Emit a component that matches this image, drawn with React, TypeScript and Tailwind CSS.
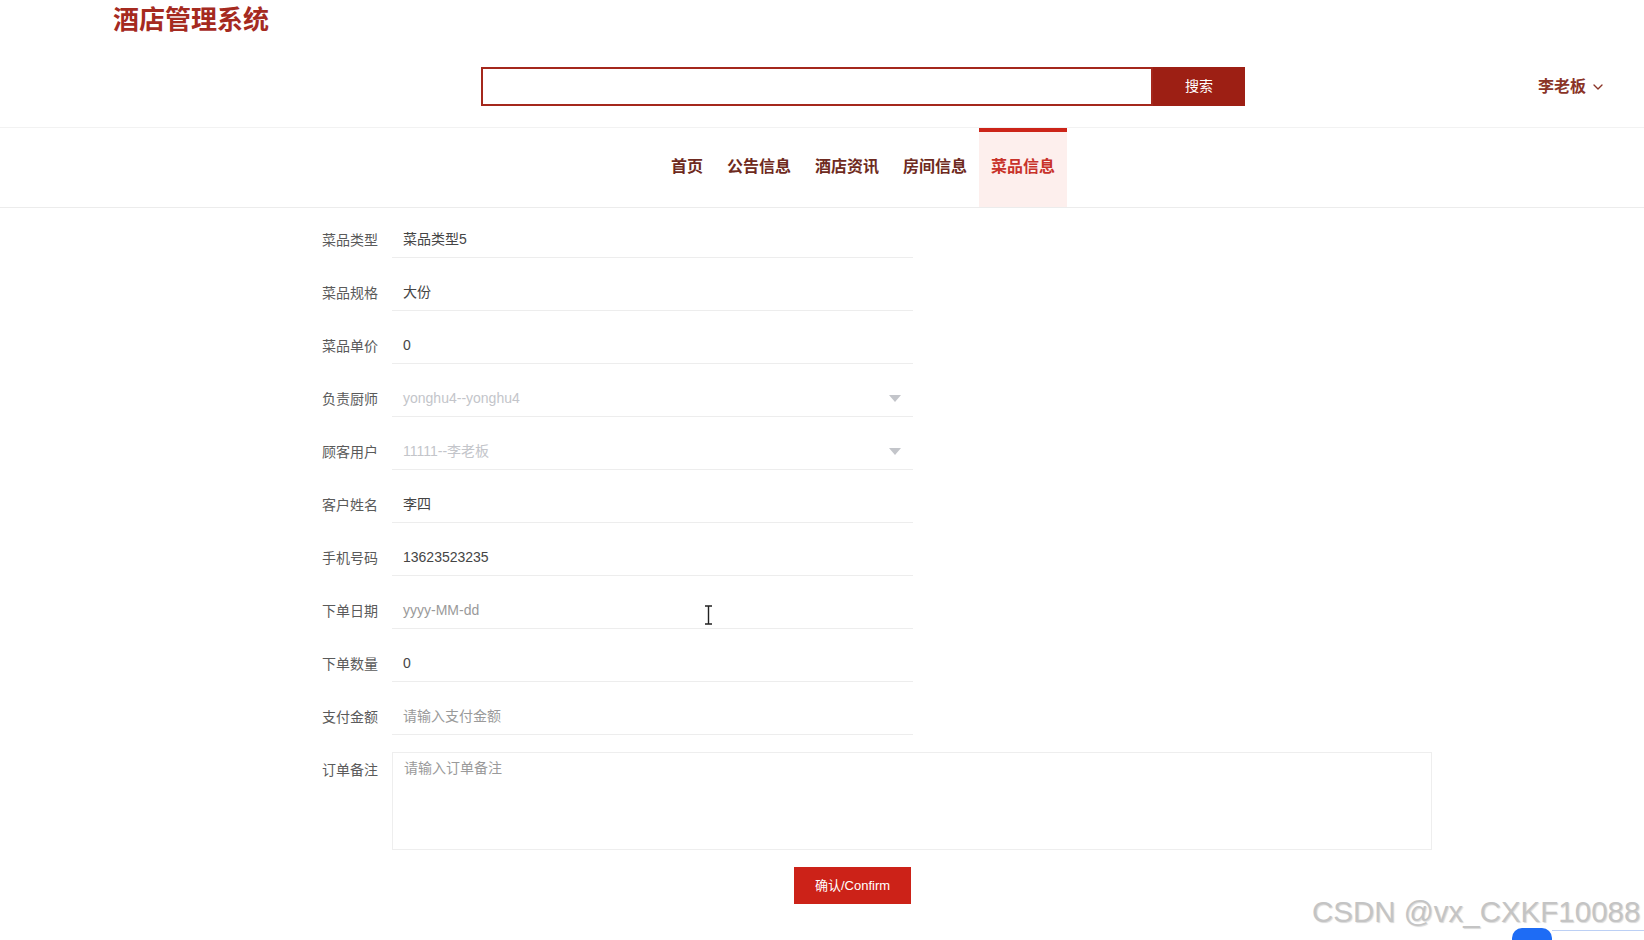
import { ChevronDown } from "lucide-react";

const navItems = ["首页", "公告信息", "酒店资讯", "房间信息", "菜品信息"];

type Field = {
  label: string;
  value: string;
  tone: "value" | "muted" | "placeholder";
  select?: boolean;
};

const fields: Field[] = [
  { label: "菜品类型", value: "菜品类型5", tone: "value" },
  { label: "菜品规格", value: "大份", tone: "value" },
  { label: "菜品单价", value: "0", tone: "value" },
  { label: "负责厨师", value: "yonghu4--yonghu4", tone: "muted", select: true },
  { label: "顾客用户", value: "11111--李老板", tone: "muted", select: true },
  { label: "客户姓名", value: "李四", tone: "value" },
  { label: "手机号码", value: "13623523235", tone: "value" },
  { label: "下单日期", value: "yyyy-MM-dd", tone: "placeholder" },
  { label: "下单数量", value: "0", tone: "value" },
  { label: "支付金额", value: "请输入支付金额", tone: "placeholder" },
];

const toneClass = {
  value: "text-[#454545]",
  muted: "text-[#c3c5ca]",
  placeholder: "text-[#9a9a9a]",
};

export default function App() {
  return (
    <div
      className="relative w-[1644px] h-[940px] overflow-hidden bg-white"
      style={{ fontFamily: '"Liberation Sans", "Noto Sans CJK SC", sans-serif' }}
    >
      {/* Header */}
      <header className="h-[128px] border-b border-[#f2f2f2]">
        <div className="pl-[113px] text-[26px] leading-[40px] font-bold text-[#a52a1f]">
          酒店管理系统
        </div>
        <div className="flex items-center mt-[27px]">
          <div className="ml-[481px] flex h-[39px] w-[764px]">
            <input
              type="text"
              className="w-[672px] h-full border-2 border-[#a4281c] outline-none px-3 text-sm"
            />
            <button className="w-[92px] h-full bg-[#9d1f14] text-white text-[14px]">搜索</button>
          </div>
          <div className="ml-auto mr-[38px] flex items-center gap-1 text-[16px] text-[#8a3427] font-semibold">
            李老板
            <ChevronDown size={16} strokeWidth={2} className="text-[#8a3427]" />
          </div>
        </div>
      </header>

      {/* Nav */}
      <nav className="h-[80px] border-b border-[#ececec] flex pl-[659px]">
        {navItems.map((item) => {
          const active = item === "菜品信息";
          return (
            <div
              key={item}
              className={`h-full px-3 pb-[6px] flex items-center border-t-4 text-[16px] font-bold ${
                active
                  ? "border-[#cc2418] bg-[#fdefed] text-[#c8322a]"
                  : "border-transparent text-[#6e2a20]"
              }`}
            >
              {item}
            </div>
          );
        })}
      </nav>

      {/* Form */}
      <main className="pt-[14px] pl-[322px] flex flex-col gap-[17px]">
        {fields.map((f) => (
          <div key={f.label} className="flex items-center gap-[14px] h-[36px]">
            <label className="w-[56px] text-[14px] text-[#5a5a5a]">{f.label}</label>
            <div className="w-[521px] h-full flex items-center justify-between px-[11px] border-b border-[#ededed] text-[14px]">
              <span className={toneClass[f.tone]}>{f.value}</span>
              {f.select && (
                <svg width="12" height="7" viewBox="0 0 12 7" className="mr-[1px]">
                  <path d="M0 0 L12 0 L6 7 Z" fill="#c3c5ca" />
                </svg>
              )}
            </div>
          </div>
        ))}

        <div className="flex items-start gap-[14px]">
          <label className="w-[56px] pt-[8px] text-[14px] text-[#5a5a5a]">订单备注</label>
          <textarea
            placeholder="请输入订单备注"
            className="w-[1040px] h-[98px] border border-[#eeeeee] px-[11px] py-[5px] text-[14px] resize-none outline-none placeholder:text-[#9a9a9a]"
          />
        </div>

        <div className="pl-[472px]">
          <button className="w-[117px] h-[37px] bg-[#cc2218] text-white text-[13px]">确认/Confirm</button>
        </div>
      </main>

      {/* Mouse cursor */}
      <svg className="absolute left-[704px] top-[605px]" width="9" height="20" viewBox="0 0 9 20">
        <path d="M1 1 H8 M4.5 1 V19 M1 19 H8" stroke="#222" strokeWidth="1.4" fill="none" />
      </svg>

      {/* Watermark */}
      <div
        className="absolute left-[1312px] top-[893px] text-[29.5px] leading-[38px] text-[#c4c4c4] whitespace-nowrap"
        style={{ textShadow: "1px 1px 1px rgba(0,0,0,0.15)" }}
      >
        CSDN @vx_CXKF10088
      </div>

      {/* Floating widget edge */}
      <div className="absolute left-[1512px] top-[928px] w-[40px] h-[24px] rounded-[10px] bg-[#1e6cf5]" />
      <div className="absolute left-[1552px] top-[930px] w-[92px] h-px bg-[#bcd0f5]" />
    </div>
  );
}
